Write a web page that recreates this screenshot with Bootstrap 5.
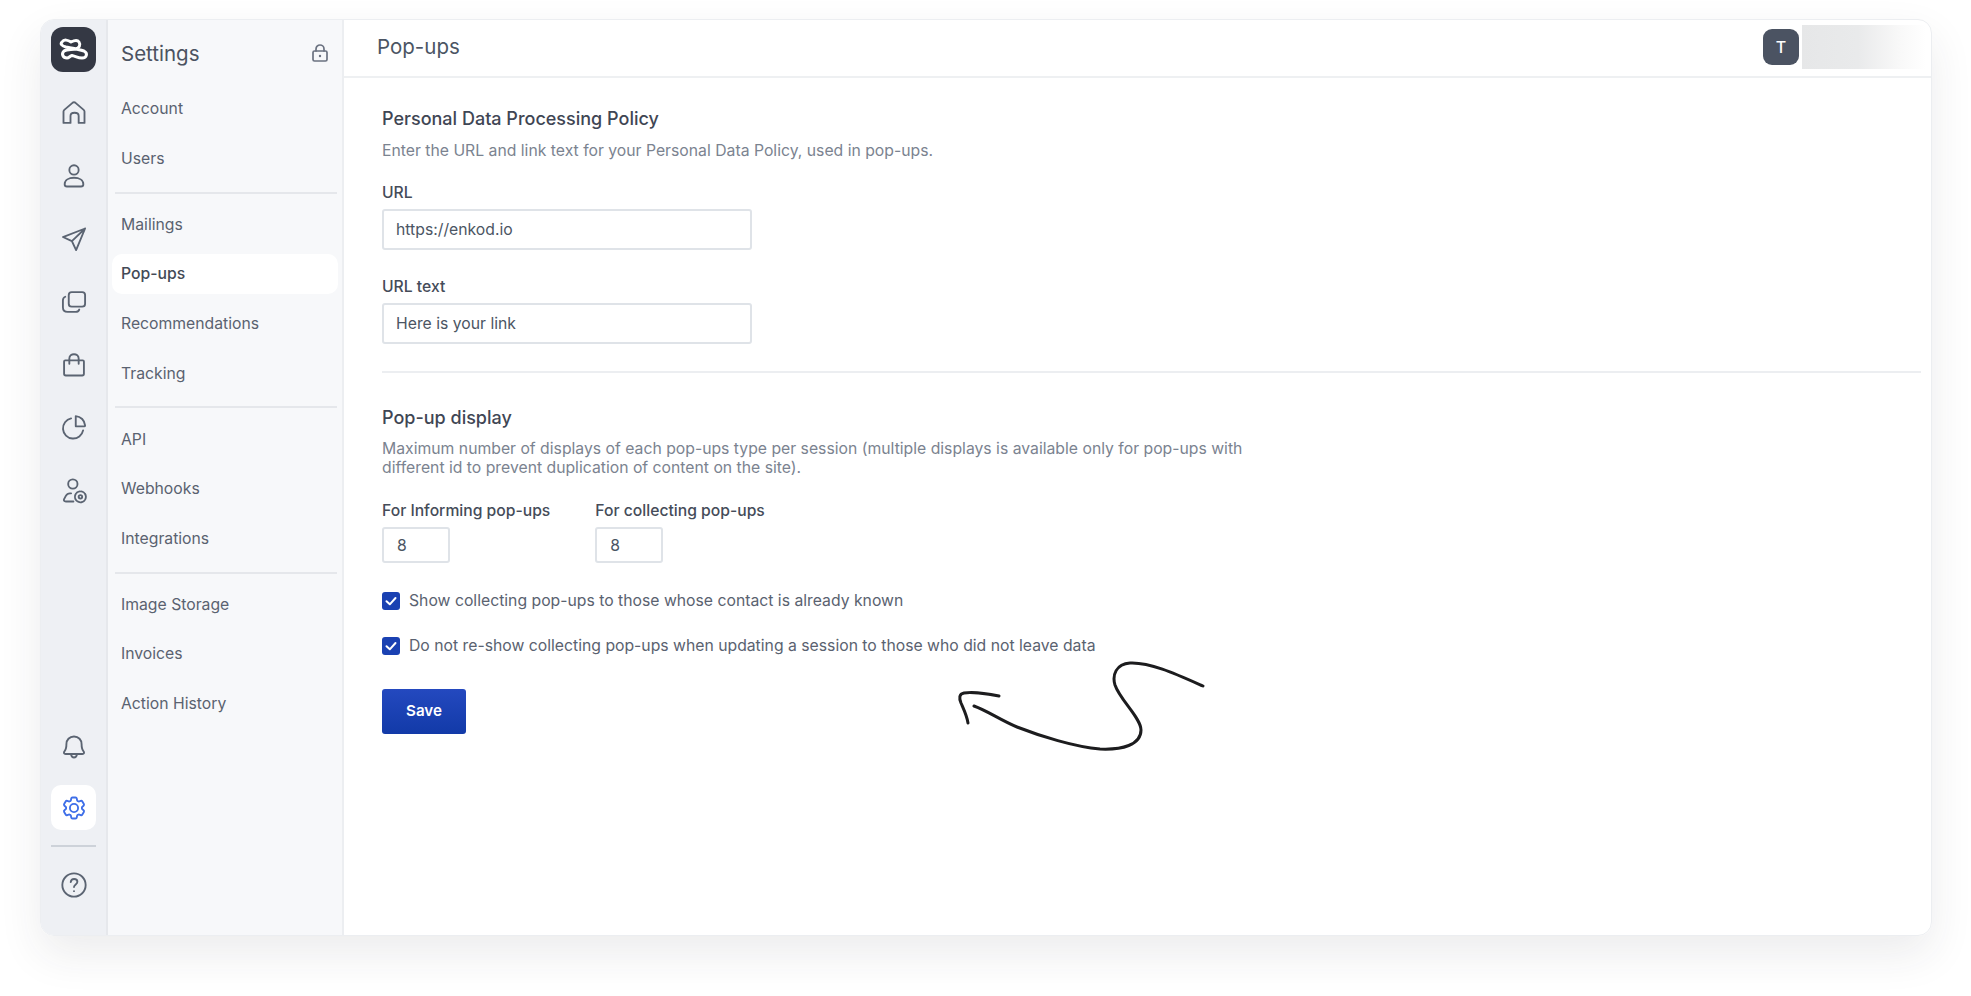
<!DOCTYPE html>
<html lang="en">
<head>
  <meta charset="UTF-8" />
  <meta name="viewport" content="width=device-width, initial-scale=1.0"/>
  <title>Pop-ups</title>
  <link href="https://cdn.jsdelivr.net/npm/bootstrap@5.3.2/dist/css/bootstrap.min.css" rel="stylesheet" />
  <style>
    html, body { height: 100%; }
    body { background: #fff; font-family: Inter, "Liberation Sans", sans-serif; color: #4b5563; overflow: hidden; }
    .app-frame { position: relative; margin: 19px 39px 0 40px; height: 917px; background: #fff; border: 1px solid #eceef1; border-radius: 14px; overflow: hidden; }
    .frame-shadow { margin: 19px 39px 0 40px; height: 917px; border-radius: 14px; box-shadow: 0 18px 44px rgba(40,45,60,.09); }
    .rail { width: 67px; background: #eef0f4; border-right: 2px solid #e6e8ec; padding-top: 7px; }
    .rail-logo { width: 45px; height: 45px; background: #343844; border-radius: 12px; }
    .rail-item { height: 63px; color: #5b6472; }
    .rail-item svg, .rail-active svg, .rail-help svg { width: 28px; height: 28px; fill: none; stroke: currentColor; stroke-width: 1.6; stroke-linecap: round; stroke-linejoin: round; }
    .rail-top { margin-top: 9px; }
    .rail-active { width: 45px; height: 45px; background: #fff; border-radius: 10px; color: #3f6fe8; margin-top: 7px; }
    .rail-sep { width: 45px; height: 2px; background: #cdd2d9; margin: 15px 0 24px; }
    .rail-help { color: #5b6472; margin-bottom: 36px; }
    .side-menu { width: 236px; background: #f7f8fa; border-right: 2px solid #eceef1; padding: 0 4px; }
    .side-head { height: 69px; padding: 0 8px 0 9px; }
    .side-title { font-size: 20.5px; color: #4b5260; }
    .side-lock { width: 20px; height: 20px; margin-bottom: 3px; fill: none; stroke: #6b7280; stroke-width: 1.7; stroke-linecap: round; stroke-linejoin: round; }
    .side-link { display: flex; align-items: center; height: 40px; margin: 0 0 9.6px; padding: 0 9px; font-size: 15.75px; color: #5a6270; text-decoration: none; border-radius: 10px; }
    .side-link.is-current { background: #fff; color: #434a56; font-weight: 500; }
    .side-sep { height: 2px; background: #e5e7eb; margin: 13px 1px 11px 3px; }
    .top-bar { height: 58px; border-bottom: 2px solid #eef0f2; padding: 0 5px 2px 33px; }
    .top-title { font-size: 20.5px; color: #4b5563; }
    .user-chip { width: 36px; height: 36px; background: #4b5362; color: #fff; border-radius: 9px; font-size: 16px; font-weight: 500; }
    .user-blur { width: 124px; height: 44px; margin-left: 3px; background: linear-gradient(90deg, #e6e7e8 0%, #e9eaeb 45%, #f8f8f8 78%, #fff 100%); }
    .form-wrap { padding: 28px 10px 0 38px; }
    .form-head { font-size: 18px; font-weight: 500; color: #3f4654; margin: 0 0 7px; line-height: 26px; }
    .form-hint { font-size: 15.75px; color: #7b8390; margin: 0 0 20px; line-height: 24px; }
    .form-hint.is-wide { width: 880px; line-height: 19px; margin-top: 8px; margin-bottom: 24px; }
    .field-label { font-size: 15.7px; font-weight: 500; color: #454c59; margin-bottom: 6px; line-height: 20px; display: block; }
    .field-input.form-control { width: 370px; height: 41px; border: 2px solid #dfe3e8; border-radius: 3px; font-size: 15.75px; color: #4b5563; padding: 0 12px; box-shadow: none; }
    .field-input.is-small.form-control { width: 68px; height: 36px; padding-left: 13px; }
    .field-gap { margin-bottom: 27px; }
    .field-col { margin-right: 45px; }
    .form-rule { height: 2px; background: #eceef1; margin: 27px 0 32px; }
    .count-row { margin-bottom: 27px; }
    .check-row { display: flex; align-items: center; gap: 9px; font-size: 15.75px; color: #5a6270; height: 22px; margin-bottom: 23px; }
    .check-row.is-last { margin-bottom: 32px; }
    .check-box { width: 18px; height: 18px; background: #1a41b2; border-radius: 3px; flex: none; }
    .check-box svg { width: 18px; height: 18px; display: block; fill: none; stroke: #fff; stroke-width: 2; stroke-linecap: round; stroke-linejoin: round; }
    .save-btn.btn { width: 84px; height: 45px; background: linear-gradient(180deg, #2449bf, #123aa8); border: 0; border-radius: 3px; color: #fff; font-size: 15.2px; font-weight: 600; padding: 0; }
    .hand-arrow { position: absolute; left: -41px; top: -20px; width: 1971px; height: 996px; pointer-events: none; fill: none; stroke: #1c1c1e; stroke-width: 3; stroke-linecap: round; stroke-linejoin: round; }
  </style>
</head>
<body>
  <div class="frame-shadow position-absolute top-0 start-0 end-0"></div>
  <div class="app-frame d-flex">
    <aside class="rail d-flex flex-column align-items-center flex-shrink-0">
      <div class="rail-logo d-flex align-items-center justify-content-center">
        <svg width="45" height="45" viewBox="0 0 45 45" fill="none" stroke="#fff" stroke-width="3" stroke-linecap="round" stroke-linejoin="round">
          <path d="M33 24C27 22 20 21 15 20C11 19 9 17 11 15C13 12 17 13 20 15C22 14 26 12 28 15C30 18 28 21 25 22C21 23 16 22 13 24C10 27 12 31 16 31C18 31 19 29 21 28.500C24 29 27 31 31 31C36 31 37 26 33 24Z"/>
        </svg>
      </div>
      <div class="rail-top w-100">
        <div class="rail-item d-flex align-items-center justify-content-center"><svg viewBox="0 0 24 24"><path d="M3 20.500V10.800c0-.6.3-1.100.7-1.500l7-6c.8-.6 1.800-.6 2.600 0l7 6c.4.400.7.900.7 1.500v9.700h-5v-6c0-3.600-7-3.600-7 0v6z"/></svg></div>
        <div class="rail-item d-flex align-items-center justify-content-center"><svg viewBox="0 0 24 24"><circle cx="12" cy="6.800" r="4"/><path d="M4 19c0-3.500 3.500-5.500 8-5.500s8 2 8 5.500c0 1.300-.8 2-2 2H6c-1.200 0-2-.7-2-2z"/></svg></div>
        <div class="rail-item d-flex align-items-center justify-content-center"><svg viewBox="0 0 24 24"><path d="M21.500 3 2.500 10.300l7.700 3.500 3.600 7.700zM21.500 3 10.200 13.800"/></svg></div>
        <div class="rail-item d-flex align-items-center justify-content-center"><svg viewBox="0 0 24 24"><rect x="7.500" y="3.500" width="14" height="12.500" rx="2.500"/><path d="M4.500 7.500C3.200 8 2.500 9 2.500 10.500v6c0 2.500 1.500 4 4 4h7c1.500 0 2.500-.7 3-2"/></svg></div>
        <div class="rail-item d-flex align-items-center justify-content-center"><svg viewBox="0 0 24 24"><path d="M4.500 8h15c.6 0 1 .4 1 1v10.500c0 1-.8 1.500-1.500 1.500H5c-.7 0-1.500-.5-1.500-1.500V9c0-.6.4-1 1-1z"/><path d="M8 11V6.500c0-5 8-5 8 0V11"/></svg></div>
        <div class="rail-item d-flex align-items-center justify-content-center"><svg viewBox="0 0 24 24"><path d="M9.500 3.800a8.700 8.700 0 1 0 10.300 10.200"/><path d="M13.500 1.800c4.300.2 7.700 3.700 8 8 0 .5-.3.800-.8.800h-7.200z"/></svg></div>
        <div class="rail-item d-flex align-items-center justify-content-center"><svg viewBox="0 0 24 24"><circle cx="11" cy="6" r="4"/><path d="M11.500 21H5c-1.500 0-2-1-1.500-2l1.500-2.800c.7-1.300 1.800-2.200 3.500-2.200H9.500"/><circle cx="17.500" cy="17" r="1.500"/><circle cx="17.500" cy="17" r="4.700" stroke-dasharray="2.600 1.100"/></svg></div>
      </div>
      <div class="mt-auto d-flex flex-column align-items-center">
        <div class="rail-item d-flex align-items-center justify-content-center"><svg viewBox="0 0 24 24"><path d="M12 3c-4 0-6.500 3-6.500 6.500 0 3.500-.5 5-1.700 6.300-.8.900-.5 2.200 1 2.200h14.400c1.500 0 1.800-1.300 1-2.200-1.200-1.300-1.700-2.800-1.700-6.300C18.500 6 16 3 12 3zM9.500 18.500c.3 1.700 1.200 2.500 2.500 2.500s2.200-.8 2.500-2.500"/></svg></div>
        <div class="rail-active d-flex align-items-center justify-content-center"><svg viewBox="0 0 24 24"><path d="M9.594 3.940c.09-.542.56-.94 1.110-.94h2.593c.55 0 1.020.398 1.110.94l.213 1.281c.063.374.313.686.645.870.074.040.147.083.22.127.325.196.72.257 1.075.124l1.217-.456a1.125 1.125 0 0 1 1.370.49l1.296 2.247a1.125 1.125 0 0 1-.26 1.431l-1.003.827c-.293.241-.438.613-.43.992a7.723 7.723 0 0 1 0 .255c-.008.378.137.75.43.991l1.004.827c.424.35.534.955.26 1.430l-1.298 2.247a1.125 1.125 0 0 1-1.369.491l-1.217-.456c-.355-.133-.75-.072-1.076.124a6.470 6.470 0 0 1-.22.128c-.331.183-.581.495-.644.869l-.213 1.281c-.09.543-.56.94-1.110.94h-2.594c-.55 0-1.019-.398-1.110-.94l-.213-1.281c-.062-.374-.312-.686-.644-.87a6.520 6.520 0 0 1-.22-.127c-.325-.196-.72-.257-1.076-.124l-1.217.456a1.125 1.125 0 0 1-1.369-.49l-1.297-2.247a1.125 1.125 0 0 1 .26-1.431l1.004-.827c.292-.24.437-.613.43-.991a6.932 6.932 0 0 1 0-.255c.007-.38-.138-.751-.43-.992l-1.004-.827a1.125 1.125 0 0 1-.26-1.430l1.297-2.247a1.125 1.125 0 0 1 1.370-.491l1.216.456c.356.133.751.072 1.076-.124.072-.044.146-.086.22-.128.332-.183.582-.495.644-.869l.214-1.280z"/><circle cx="12" cy="12" r="3.500"/></svg></div>
        <div class="rail-sep"></div>
        <div class="rail-help d-flex align-items-center justify-content-center"><svg viewBox="0 0 24 24"><circle cx="12" cy="12" r="10"/><path d="M9.200 9.500c.2-1.700 1.400-2.600 2.900-2.600 1.600 0 2.800 1 2.800 2.400 0 2.200-2.900 2.300-2.900 4.500"/><path d="M12 17.200v.1"/></svg></div>
      </div>
    </aside>

    <nav class="side-menu flex-shrink-0">
      <div class="side-head d-flex align-items-center justify-content-between">
        <span class="side-title">Settings</span>
        <svg class="side-lock" viewBox="0 0 20 20"><rect x="3" y="8" width="14" height="10" rx="1.500"/><path d="M6 8V6a4 4 0 0 1 8 0v2"/><path d="M10 13v.1" stroke-width="2.400"/></svg>
      </div>
      <a class="side-link" href="#">Account</a>
      <a class="side-link" href="#">Users</a>
      <div class="side-sep"></div>
      <a class="side-link" href="#">Mailings</a>
      <a class="side-link is-current" href="#">Pop-ups</a>
      <a class="side-link" href="#">Recommendations</a>
      <a class="side-link" href="#">Tracking</a>
      <div class="side-sep"></div>
      <a class="side-link" href="#">API</a>
      <a class="side-link" href="#">Webhooks</a>
      <a class="side-link" href="#">Integrations</a>
      <div class="side-sep"></div>
      <a class="side-link" href="#">Image Storage</a>
      <a class="side-link" href="#">Invoices</a>
      <a class="side-link" href="#">Action History</a>
    </nav>

    <main class="flex-grow-1 d-flex flex-column">
      <header class="top-bar d-flex align-items-center justify-content-between">
        <span class="top-title">Pop-ups</span>
        <div class="d-flex align-items-center">
          <div class="user-chip d-flex align-items-center justify-content-center">T</div>
          <div class="user-blur"></div>
        </div>
      </header>
      <div class="form-wrap">
        <h2 class="form-head">Personal Data Processing Policy</h2>
        <p class="form-hint">Enter the URL and link text for your Personal Data Policy, used in pop-ups.</p>
        <label class="field-label">URL</label>
        <input class="form-control field-input field-gap" value="https://enkod.io" />
        <label class="field-label">URL text</label>
        <input class="form-control field-input" value="Here is your link" />
        <div class="form-rule"></div>
        <h2 class="form-head">Pop-up display</h2>
        <p class="form-hint is-wide">Maximum number of displays of each pop-ups type per session (multiple displays is available only for pop-ups with different id to prevent duplication of content on the site).</p>
        <div class="d-flex count-row">
          <div class="field-col"><label class="field-label">For Informing pop-ups</label><input class="form-control field-input is-small" value="8" /></div>
          <div><label class="field-label">For collecting pop-ups</label><input class="form-control field-input is-small" value="8" /></div>
        </div>
        <div class="check-row"><span class="check-box"><svg viewBox="0 0 18 18"><path d="M4.500 9.200 7.800 12.300 13.500 6"/></svg></span>Show collecting pop-ups to those whose contact is already known</div>
        <div class="check-row is-last"><span class="check-box"><svg viewBox="0 0 18 18"><path d="M4.500 9.200 7.800 12.300 13.500 6"/></svg></span>Do not re-show collecting pop-ups when updating a session to those who did not leave data</div>
        <button class="btn save-btn" type="button">Save</button>
      </div>
    </main>
    <svg class="hand-arrow" viewBox="0 0 1971 996">
      <path d="M1203 686C1176 674 1150 662 1130 663C1116 664 1112 675 1115 685C1120 700 1141 718 1141 730C1141 745 1122 750 1100 749C1075 747 1040 736 1017 727C1000 720 988 711 974 706"/>
      <path d="M999 696C985 693 970 692 964 693C959 694 959 698 961 703C964 710 967 716 968 723"/>
    </svg>
  </div>
</body>
</html>
